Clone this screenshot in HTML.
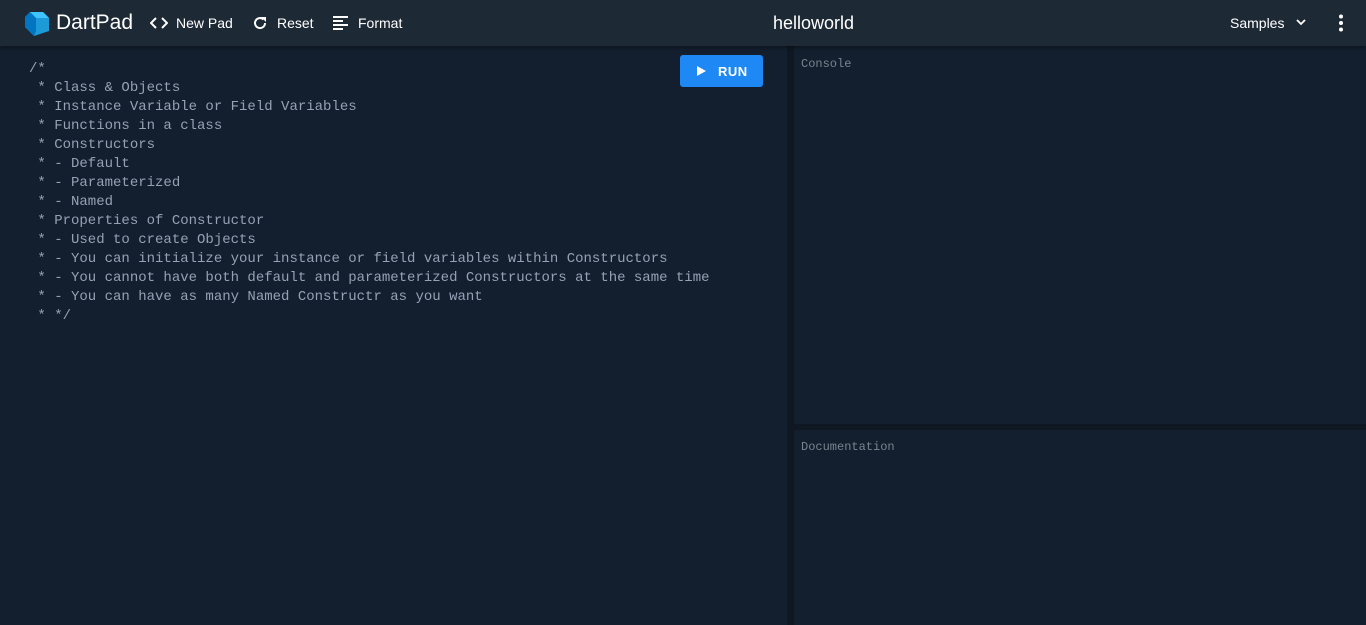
<!DOCTYPE html>
<html><head><meta charset="utf-8"><style>
*{margin:0;padding:0;box-sizing:border-box}
body{width:1366px;height:625px;background:#131f2f;overflow:hidden;font-family:"Liberation Sans",sans-serif;position:relative}
.hdr{position:absolute;left:0;top:0;width:1366px;height:46px;background:#1e2936;box-shadow:0 2px 4px rgba(0,0,0,.35);z-index:2}
.hdr .t{position:absolute;color:#fff;font-size:14px;top:15px}
.logo{position:absolute;left:24px;top:11px}
.code{position:absolute;left:29px;top:60px;font-family:"Liberation Mono",monospace;font-size:14px;line-height:19px;color:#96a1b5;white-space:pre}
.run{position:absolute;left:680px;top:55px;width:83px;height:32px;background:#1e88f5;border-radius:3px;color:#fff;font-size:13px;font-weight:bold;letter-spacing:.5px}
.vg{position:absolute;left:787px;top:46px;width:7px;height:579px;background:#0f1822}
.hg{position:absolute;left:794px;top:424px;width:572px;height:6px;background:#0f1822}
.lbl{position:absolute;font-family:"Liberation Mono",monospace;font-size:12px;color:#7b838f}
</style></head><body>
<div class="hdr">
<svg class="logo" width="26" height="26" viewBox="0 0 26 26"><path d="M6 1 L19 1 L25 7 L25 20 L10 25 L1 16 L1 6Z" fill="#1d9bd8"/><path d="M6 1 L19 1 L25 7 L12 7Z" fill="#40c4ff"/><path d="M1 6 L6 1 L12 7 L12 20 L10 25 L1 16Z" fill="#0175c2"/></svg>
<div class="t" style="left:56px;top:11px;font-size:21px">DartPad</div>
<svg style="position:absolute;left:150px;top:17px" width="18" height="12" viewBox="0 0 18 12"><path d="M6 1 L1 6 L6 11 M12 1 L17 6 L12 11" stroke="#fff" stroke-width="2" fill="none"/></svg>
<div class="t" style="left:176px">New Pad</div>
<svg style="position:absolute;left:252px;top:15px" width="16" height="16" viewBox="0 0 16 16"><path d="M13 8 A5 5 0 1 1 11.5 4.5" stroke="#fff" stroke-width="2" fill="none"/><path d="M9 2 L14 2 L14 7Z" fill="#fff"/></svg>
<div class="t" style="left:277px">Reset</div>
<svg style="position:absolute;left:333px;top:16px" width="15" height="14" viewBox="0 0 15 14"><path d="M0 1H15M0 5H10M0 9H15M0 13H10" stroke="#fff" stroke-width="2"/></svg>
<div class="t" style="left:358px">Format</div>
<div class="t" style="left:773px;top:13px;font-size:18px">helloworld</div>
<div class="t" style="left:1230px">Samples</div>
<svg style="position:absolute;left:1296px;top:19px" width="10" height="7" viewBox="0 0 10 7"><path d="M1 1 L5 5 L9 1" stroke="#fff" stroke-width="1.8" fill="none"/></svg>
<svg style="position:absolute;left:1338px;top:14px" width="6" height="18" viewBox="0 0 6 18"><circle cx="3" cy="2.5" r="2" fill="#fff"/><circle cx="3" cy="9" r="2" fill="#fff"/><circle cx="3" cy="15.5" r="2" fill="#fff"/></svg>
</div>
<div class="code">/*
 * Class &amp; Objects
 * Instance Variable or Field Variables
 * Functions in a class
 * Constructors
 * - Default
 * - Parameterized
 * - Named
 * Properties of Constructor
 * - Used to create Objects
 * - You can initialize your instance or field variables within Constructors
 * - You cannot have both default and parameterized Constructors at the same time
 * - You can have as many Named Constructr as you want
 * */</div>
<div class="run"><svg style="position:absolute;left:17px;top:11px" width="9" height="10" viewBox="0 0 9 10"><path d="M0 0 L9 5 L0 10Z" fill="#fff"/></svg><span style="position:absolute;left:38px;top:9px">RUN</span></div>
<div class="vg"></div><div class="hg"></div>
<div class="lbl" style="left:801px;top:57px">Console</div>
<div class="lbl" style="left:801px;top:440px">Documentation</div>
</body></html>
